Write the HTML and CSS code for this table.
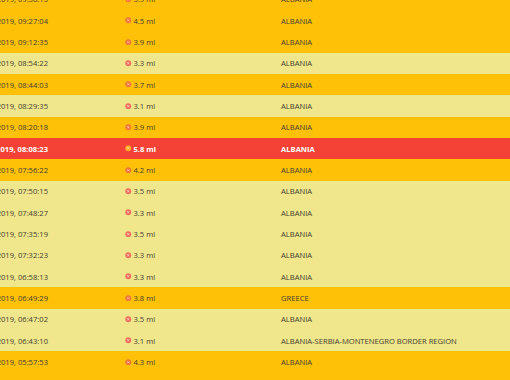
FILE: index.html
```html
<!DOCTYPE html>
<html lang="en">
<head>
<meta charset="utf-8">
<title>Earthquakes</title>
<link rel="stylesheet" href="styles.css">
</head>
<body>
<div class="table">
  <div class="row amber first"><span class="date">26.11.2019, 09:38:15</span><span class="mag"><svg class="ico" viewBox="0 0 10 10"><circle cx="5" cy="5" r="4.6"/><path d="M3.3 3.3 6.7 6.7M6.7 3.3 3.3 6.7"/></svg>3.9 ml</span><span class="region">ALBANIA</span></div>
  <div class="row amber"><span class="date">26.11.2019, 09:27:04</span><span class="mag"><svg class="ico" viewBox="0 0 10 10"><circle cx="5" cy="5" r="4.6"/><path d="M3.3 3.3 6.7 6.7M6.7 3.3 3.3 6.7"/></svg>4.5 ml</span><span class="region">ALBANIA</span></div>
  <div class="row amber"><span class="date">26.11.2019, 09:12:35</span><span class="mag"><svg class="ico" viewBox="0 0 10 10"><circle cx="5" cy="5" r="4.6"/><path d="M3.3 3.3 6.7 6.7M6.7 3.3 3.3 6.7"/></svg>3.9 ml</span><span class="region">ALBANIA</span></div>
  <div class="row light"><span class="date">26.11.2019, 08:54:22</span><span class="mag"><svg class="ico" viewBox="0 0 10 10"><circle cx="5" cy="5" r="4.6"/><path d="M3.3 3.3 6.7 6.7M6.7 3.3 3.3 6.7"/></svg>3.3 ml</span><span class="region">ALBANIA</span></div>
  <div class="row amber"><span class="date">26.11.2019, 08:44:03</span><span class="mag"><svg class="ico" viewBox="0 0 10 10"><circle cx="5" cy="5" r="4.6"/><path d="M3.3 3.3 6.7 6.7M6.7 3.3 3.3 6.7"/></svg>3.7 ml</span><span class="region">ALBANIA</span></div>
  <div class="row light"><span class="date">26.11.2019, 08:29:35</span><span class="mag"><svg class="ico" viewBox="0 0 10 10"><circle cx="5" cy="5" r="4.6"/><path d="M3.3 3.3 6.7 6.7M6.7 3.3 3.3 6.7"/></svg>3.1 ml</span><span class="region">ALBANIA</span></div>
  <div class="row amber"><span class="date">26.11.2019, 08:20:18</span><span class="mag"><svg class="ico" viewBox="0 0 10 10"><circle cx="5" cy="5" r="4.6"/><path d="M3.3 3.3 6.7 6.7M6.7 3.3 3.3 6.7"/></svg>3.9 ml</span><span class="region">ALBANIA</span></div>
  <div class="row red"><span class="date">26.11.2019, 08:08:23</span><span class="mag"><svg class="ico" viewBox="0 0 10 10"><circle cx="5" cy="5" r="4.6"/><path d="M3.3 3.3 6.7 6.7M6.7 3.3 3.3 6.7"/></svg>5.8 ml</span><span class="region">ALBANIA</span></div>
  <div class="row amber"><span class="date">26.11.2019, 07:56:22</span><span class="mag"><svg class="ico" viewBox="0 0 10 10"><circle cx="5" cy="5" r="4.6"/><path d="M3.3 3.3 6.7 6.7M6.7 3.3 3.3 6.7"/></svg>4.2 ml</span><span class="region">ALBANIA</span></div>
  <div class="row light"><span class="date">26.11.2019, 07:50:15</span><span class="mag"><svg class="ico" viewBox="0 0 10 10"><circle cx="5" cy="5" r="4.6"/><path d="M3.3 3.3 6.7 6.7M6.7 3.3 3.3 6.7"/></svg>3.5 ml</span><span class="region">ALBANIA</span></div>
  <div class="row light"><span class="date">26.11.2019, 07:48:27</span><span class="mag"><svg class="ico" viewBox="0 0 10 10"><circle cx="5" cy="5" r="4.6"/><path d="M3.3 3.3 6.7 6.7M6.7 3.3 3.3 6.7"/></svg>3.3 ml</span><span class="region">ALBANIA</span></div>
  <div class="row light"><span class="date">26.11.2019, 07:35:19</span><span class="mag"><svg class="ico" viewBox="0 0 10 10"><circle cx="5" cy="5" r="4.6"/><path d="M3.3 3.3 6.7 6.7M6.7 3.3 3.3 6.7"/></svg>3.5 ml</span><span class="region">ALBANIA</span></div>
  <div class="row light"><span class="date">26.11.2019, 07:32:23</span><span class="mag"><svg class="ico" viewBox="0 0 10 10"><circle cx="5" cy="5" r="4.6"/><path d="M3.3 3.3 6.7 6.7M6.7 3.3 3.3 6.7"/></svg>3.3 ml</span><span class="region">ALBANIA</span></div>
  <div class="row light"><span class="date">26.11.2019, 06:58:13</span><span class="mag"><svg class="ico" viewBox="0 0 10 10"><circle cx="5" cy="5" r="4.6"/><path d="M3.3 3.3 6.7 6.7M6.7 3.3 3.3 6.7"/></svg>3.3 ml</span><span class="region">ALBANIA</span></div>
  <div class="row amber"><span class="date">26.11.2019, 06:49:29</span><span class="mag"><svg class="ico" viewBox="0 0 10 10"><circle cx="5" cy="5" r="4.6"/><path d="M3.3 3.3 6.7 6.7M6.7 3.3 3.3 6.7"/></svg>3.8 ml</span><span class="region">GREECE</span></div>
  <div class="row light"><span class="date">26.11.2019, 06:47:02</span><span class="mag"><svg class="ico" viewBox="0 0 10 10"><circle cx="5" cy="5" r="4.6"/><path d="M3.3 3.3 6.7 6.7M6.7 3.3 3.3 6.7"/></svg>3.5 ml</span><span class="region">ALBANIA</span></div>
  <div class="row light"><span class="date">26.11.2019, 06:43:10</span><span class="mag"><svg class="ico" viewBox="0 0 10 10"><circle cx="5" cy="5" r="4.6"/><path d="M3.3 3.3 6.7 6.7M6.7 3.3 3.3 6.7"/></svg>3.1 ml</span><span class="region">ALBANIA-SERBIA-MONTENEGRO BORDER REGION</span></div>
  <div class="row amber"><span class="date">26.11.2019, 05:57:53</span><span class="mag"><svg class="ico" viewBox="0 0 10 10"><circle cx="5" cy="5" r="4.6"/><path d="M3.3 3.3 6.7 6.7M6.7 3.3 3.3 6.7"/></svg>4.3 ml</span><span class="region">ALBANIA</span></div>
  <div class="row amber"><span class="date">26.11.2019, 05:41:36</span><span class="mag"><svg class="ico" viewBox="0 0 10 10"><circle cx="5" cy="5" r="4.6"/><path d="M3.3 3.3 6.7 6.7M6.7 3.3 3.3 6.7"/></svg>4.1 ml</span><span class="region">ALBANIA</span></div>
</div>
</body>
</html>
```
FILE: styles.css
```css
html, body {
  margin: 0;
  padding: 0;
  width: 510px;
  height: 380px;
  overflow: hidden;
  background: #ffc107;
}

.table {
  display: flex;
  flex-direction: column;
  margin-top: -11.333px;
  margin-left: -100px;
  font-family: "Open Sans", "Liberation Sans", sans-serif;
  font-size: 7.6px;
  color: #454030;
}

.row {
  display: grid;
  grid-template-columns: 148px 233px 1fr;
  align-items: center;
  height: 21.333px;
}

.amber { background: #ffc107; }
.light { background: #f0e68c; }
.red { background: #f44336; color: #fff; font-weight: 700; }

.date {
  text-align: right;
  white-space: nowrap;
}

.mag {
  display: flex;
  align-items: center;
  gap: 2px;
  padding-left: 77px;
  white-space: nowrap;
}

.region {
  white-space: nowrap;
}

.ico {
  width: 6.5px;
  height: 6.5px;
  flex: none;
}
.ico circle { fill: #f4743a; }
.ico path { stroke: #ffc09a; stroke-width: 1.4; fill: none; }
.light .ico circle { fill: #f27060; }
.light .ico path { stroke: #ffc4b4; }
.red .ico circle { fill: #ffa726; }
.red .ico path { stroke: #ffe08a; }
```
